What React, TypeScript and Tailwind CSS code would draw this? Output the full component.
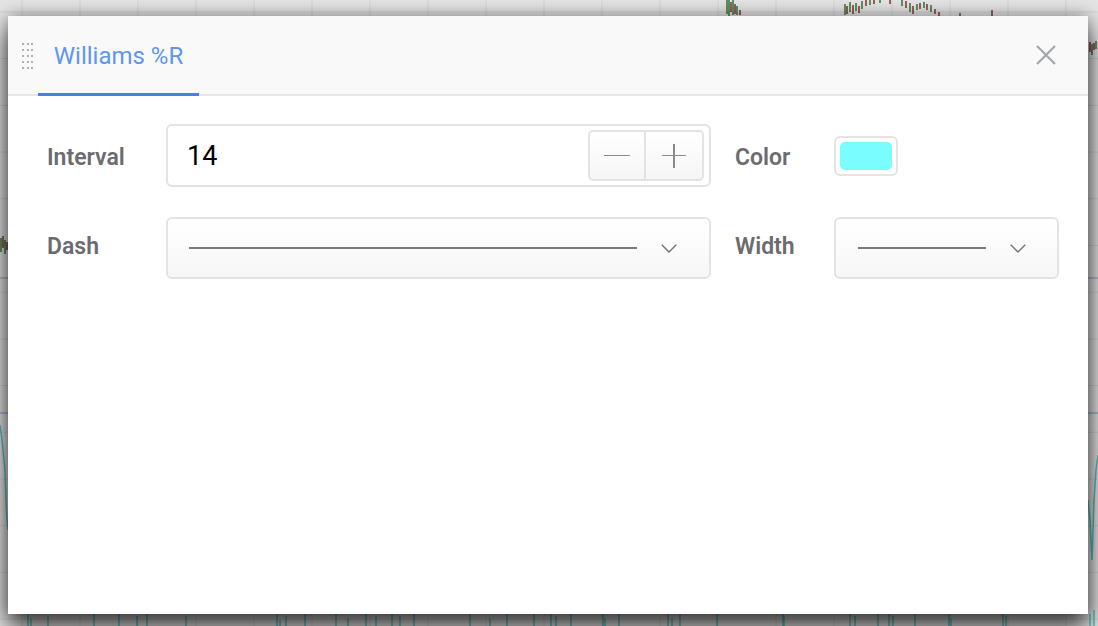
import React from "react";

const VLINES = Array.from({ length: 19 }, (_, i) => 22 + i * 58);
const HLINES = Array.from({ length: 14 }, (_, i) => 12 + i * 46.7);

// little candle clusters peeking out round the dialog
const CANDLES: [number, number, number, boolean][] = [
  [727, 0, 14, true], [729, 0, 16, true], [731, 2, 12, false], [733, 0, 15, true], [735, 4, 14, false],
  [737, 6, 15, true], [740, 10, 15, false],
  [845, 4, 15, true], [847, 6, 14, false], [850, 2, 12, true], [853, 5, 14, false], [856, 3, 11, true],
  [859, 6, 13, false], [862, 1, 9, true], [866, 0, 6, false], [870, 0, 5, true], [874, 0, 4, false],
  [880, 0, 3, true], [890, 0, 4, false], [902, 0, 6, true], [906, 1, 8, false], [910, 3, 12, true],
  [913, 6, 14, false], [917, 4, 10, true], [920, 3, 9, false], [924, 2, 8, true], [927, 4, 10, false],
  [931, 5, 12, true], [935, 9, 14, false], [939, 12, 16, false], [960, 13, 16, true], [992, 10, 16, false],
  [1090, 42, 52, false], [1092, 44, 55, true], [1094, 43, 50, false], [1096, 41, 49, true],
  [1, 238, 252, true], [3, 236, 248, false], [5, 240, 254, true], [7, 242, 250, false],
];

const SPIKES: [number, number][] = [
  [28, 614], [31, 618], [48, 616], [94, 614], [119, 614], [137, 616], [147, 614], [186, 616],
  [277, 614], [280, 620], [286, 616], [305, 614], [336, 614], [348, 618], [366, 614], [376, 616],
  [392, 614], [400, 616], [414, 614], [470, 614], [490, 618], [507, 614], [534, 614], [551, 614],
  [556, 616], [571, 614], [603, 614], [605, 618], [619, 614], [668, 614], [672, 618], [680, 614],
  [717, 614], [783, 614], [784, 616], [850, 614], [855, 616], [878, 614], [889, 614], [893, 616],
  [915, 614], [949, 614], [951, 618], [1003, 614], [1006, 616], [1090, 614], [1094, 610],
];

function ChartBackdrop() {
  return (
    <svg className="absolute inset-0" width={1098} height={626} viewBox="0 0 1098 626">
      <rect width={1098} height={626} fill="#ffffff" />
      {VLINES.map((x) => (
        <line key={`v${x}`} x1={x} y1={0} x2={x} y2={626} stroke="#ebebeb" strokeWidth={1} />
      ))}
      {HLINES.map((y) => (
        <line key={`h${y}`} x1={0} y1={y} x2={1098} y2={y} stroke="#ebebeb" strokeWidth={1} />
      ))}
      <line x1={0} y1={278} x2={1098} y2={278} stroke="#9fb3d6" strokeWidth={1} />
      <line x1={0} y1={413} x2={1098} y2={413} stroke="#8aa8d8" strokeWidth={1} />
      {CANDLES.map(([x, y1, y2, up], i) => (
        <line key={`c${i}`} x1={x} y1={y1} x2={x} y2={y2} stroke={up ? "#2f7a2f" : "#8a2b2b"} strokeWidth={1.4} />
      ))}
      <path d="M0 425 L2 440 L3 450 L5 470 L6 500 L7 520 L8 530" fill="none" stroke="#62d6d6" strokeWidth={1.5} />
      <path d="M1088 500 L1090 520 L1092 560 L1094 500 L1096 470 L1098 455" fill="none" stroke="#62d6d6" strokeWidth={1.5} />
      {SPIKES.map(([x, y], i) => (
        <line key={`s${i}`} x1={x} y1={626} x2={x} y2={y} stroke="#62d6d6" strokeWidth={1.4} />
      ))}
    </svg>
  );
}

function Chevron() {
  return (
    <svg width="16" height="9" viewBox="0 0 16 9" fill="none" className="shrink-0">
      <path d="M0.75 0.75 L8 8 L15.25 0.75" stroke="#707070" strokeWidth="1.4" />
    </svg>
  );
}

function Label({ children, className = "" }: { children: React.ReactNode; className?: string }) {
  return (
    <div className={`flex items-center text-[23px] font-semibold text-[#6c6c70] ${className}`}>
      {children}
    </div>
  );
}

export default function App() {
  return (
    <div className="relative h-[626px] w-[1098px] overflow-hidden font-['Roboto','Liberation_Sans',sans-serif]">
      <ChartBackdrop />
      <div className="absolute inset-0 bg-black/10" />

      <div className="absolute inset-0 pl-2 pt-4 pr-[10px] pb-3">
        <div className="flex h-[598px] w-[1080px] flex-col bg-white shadow-[0_0_16px_rgba(0,0,0,0.35),0_14px_24px_rgba(0,0,0,0.7)]">
          {/* header with tab */}
          <div className="flex h-[80px] items-stretch border-b-2 border-[#e6e6e6] bg-[#f9f9f9]">
            <div className="flex items-center pl-[14px] pt-[2px]">
              <div className="grid grid-cols-3 gap-x-[2.5px] gap-y-[4px]">
                {Array.from({ length: 15 }).map((_, i) => (
                  <span key={i} className="h-[2px] w-[2px] bg-[#b0b0b0]" />
                ))}
              </div>
            </div>
            <div className="relative ml-[5px] flex w-[161px] items-center justify-center pt-[2px]">
              <span className="text-[24px] text-[#5e96f3]">Williams %R</span>
              <span className="absolute bottom-[-2px] left-0 right-0 h-[3px] bg-[#4a80e3]" />
            </div>
            <div className="ml-auto flex items-center pr-[32px]">
              <svg width="20" height="20" viewBox="0 0 20 20">
                <path d="M1 1 L19 19 M19 1 L1 19" stroke="#a3a7ad" strokeWidth="2.2" />
              </svg>
            </div>
          </div>

          {/* settings */}
          <div className="grid grid-cols-[119px_545px_123px_225px] gap-y-[30px] pl-[39px] pt-7">
            <Label className="pt-[6px]">Interval</Label>
            <div className="flex h-[63px] items-center rounded-md border-2 border-[#e3e3e3] bg-white pl-[19px] pr-[5px]">
              <span className="pt-[2px] text-[27px] text-black">14</span>
              <div className="ml-auto flex h-[51px] w-[116px] overflow-hidden rounded-[5px] border-2 border-[#e3e3e3] bg-gradient-to-b from-white to-[#f6f6f6]">
                <button className="flex w-[56px] items-center justify-center border-r-2 border-[#e3e3e3]">
                  <span className="h-[1.5px] w-[26px] bg-[#8a8a8a]" />
                </button>
                <button className="relative flex flex-1 items-center justify-center">
                  <span className="h-[1.5px] w-[24px] bg-[#8a8a8a]" />
                  <span className="absolute h-[24px] w-[1.5px] bg-[#8a8a8a]" />
                </button>
              </div>
            </div>
            <Label className="pl-6 pt-[6px]">Color</Label>
            <div className="flex items-center">
              <div className="flex h-[40px] w-[64px] items-center justify-center rounded-md border-2 border-[#e4e4e4] bg-white">
                <span className="h-[28px] w-[52px] rounded-[5px] bg-[#79fdfd]" />
              </div>
            </div>

            <Label className="pb-[1px]">Dash</Label>
            <div className="flex h-[62px] items-center rounded-md border-2 border-[#e3e3e3] bg-gradient-to-b from-white to-[#f7f7f7] pl-[21px] pr-[32px]">
              <span className="h-[2px] flex-1 bg-[#7a7a7a]" />
              <span className="ml-6">
                <Chevron />
              </span>
            </div>
            <Label className="pl-6 pb-[1px]">Width</Label>
            <div className="flex h-[62px] items-center rounded-md border-2 border-[#e3e3e3] bg-gradient-to-b from-white to-[#f7f7f7] pl-[22px] pr-[31px]">
              <span className="h-[2px] flex-1 bg-[#7a7a7a]" />
              <span className="ml-6">
                <Chevron />
              </span>
            </div>
          </div>
        </div>
      </div>
    </div>
  );
}
